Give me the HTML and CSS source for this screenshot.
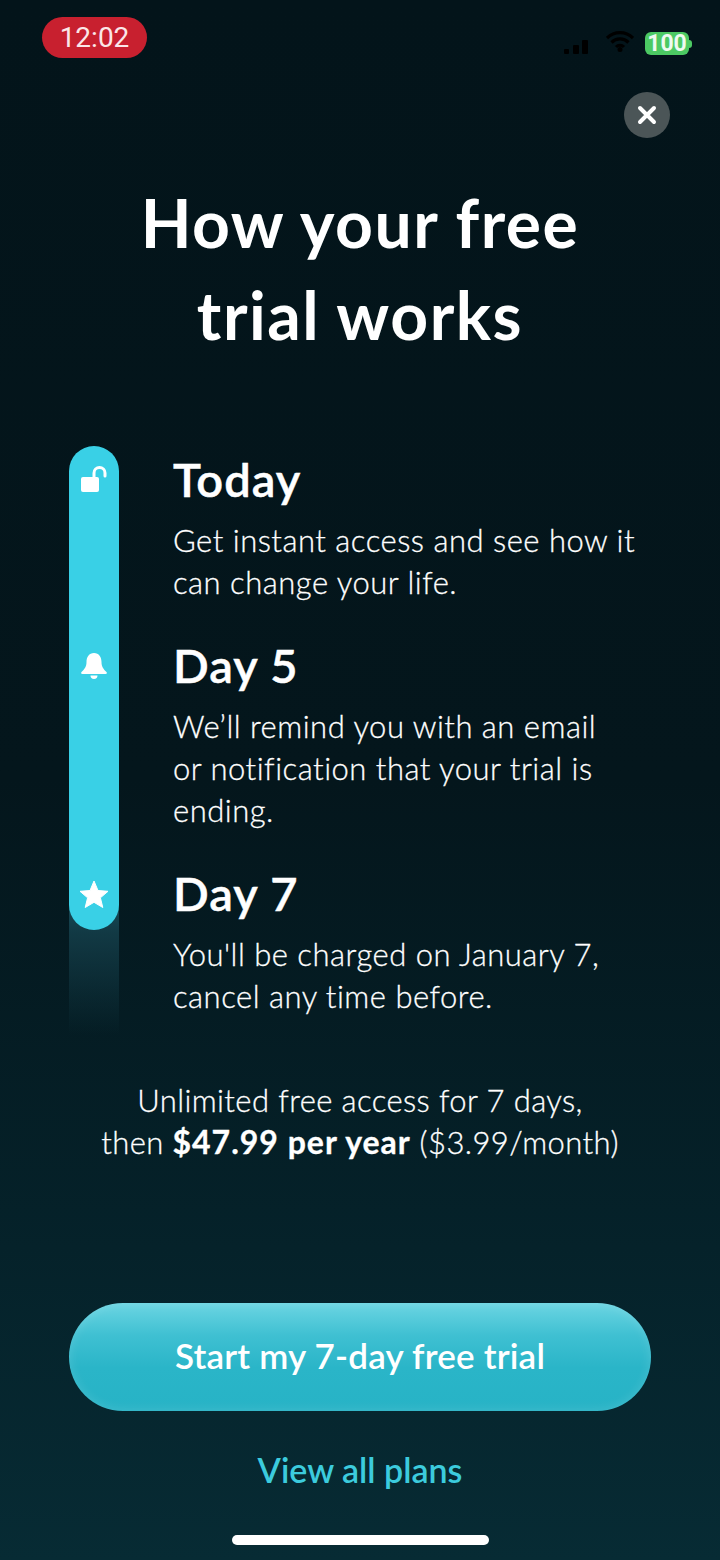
FILE: index.html
```html
<!DOCTYPE html>
<html lang="en">
<head>
  <meta charset="UTF-8" />
  <title>How your free trial works</title>
  <link rel="stylesheet" href="styles.css">
</head>
<body>

<div class="screen">
  <div class="status-bar">
    <span class="time">12:02</span>
    <div class="status-icons">
      <svg class="signal" width="25" height="16" viewBox="0 0 25 16"><rect x="0" y="11" width="5" height="5" rx="1"/><rect x="9" y="7" width="6" height="9" rx="1"/><rect x="18" y="2" width="6" height="14" rx="1"/></svg>
      <svg class="wifi" width="28" height="22" viewBox="0 0 28 22"><path d="M1 8a18.500 18.500 0 0 1 26 0M5.500 12.500a12 12 0 0 1 17 0M10 17a5.500 5.500 0 0 1 8 0" fill="none" stroke="#000" stroke-width="3.200"/><circle cx="14" cy="19.500" r="2.500" fill="#000"/></svg>
      <div class="battery"><span class="battery-level">100</span><span class="battery-tip"></span></div>
    </div>
  </div>

  <div class="close-row">
    <button class="close-btn">
      <svg width="22" height="22" viewBox="0 0 22 22"><path d="M4 4l14 14M18 4L4 18" stroke="#fff" stroke-width="4" stroke-linecap="round"/></svg>
    </button>
  </div>

  <h1 class="title">How your free<br>trial works</h1>

  <div class="timeline">
    <div class="rail-col">
      <div class="rail">
        <svg class="rail-icon icon-lock" width="28" height="28" viewBox="0 0 28 28"><rect x="1" y="11" width="18" height="15" rx="2" fill="#fff"/><path d="M14 11V7a5.500 5.500 0 0 1 11 0v3" fill="none" stroke="#fff" stroke-width="3" stroke-linecap="round"/></svg>
        <svg class="rail-icon icon-bell" width="28" height="28" viewBox="0 0 28 28"><path d="M14 1c-5 0-7.500 4-7.500 9 0 5-2 7-5 10-.8 1-.3 2 1 2h23c1.300 0 1.800-1 1-2-3-3-5-5-5-10 0-5-2.500-9-7.500-9z" fill="#fff"/><path d="M10.500 23.500h7a3.500 3.500 0 0 1-7 0z" fill="#fff"/></svg>
        <svg class="rail-icon icon-star" width="30" height="28" viewBox="0 0 30 28"><path d="M15 1l4 9.500 10 .8-7.600 6.500 2.400 9.700L15 22.300 6.200 27.500l2.400-9.700L1 11.300l10-.8z" fill="#fff" stroke="#fff" stroke-width="1" stroke-linejoin="round"/></svg>
      </div>
      <div class="rail-fade"></div>
    </div>

    <div class="steps">
      <div class="step">
        <h2>Today</h2>
        <p>Get instant access and see how it<br>can change your life.</p>
      </div>
      <div class="step">
        <h2>Day 5</h2>
        <p>We’ll remind you with an email<br>or notification that your trial is<br>ending.</p>
      </div>
      <div class="step">
        <h2>Day 7</h2>
        <p>You'll be charged on January 7,<br>cancel any time before.</p>
      </div>
    </div>
  </div>

  <p class="price">Unlimited free access for 7 days,<br>then <b>$47.99 per year</b> ($3.99/month)</p>

  <button class="cta">Start my 7-day free trial</button>
  <a class="plans-link">View all plans</a>
  <div class="home-indicator"></div>
</div>

</body>
</html>
```

FILE: styles.css
```css
* { box-sizing: border-box; }
body {
  margin: 0;
  font-family: "Lato", "Noto Sans", sans-serif;
  color: #fff;
}
.screen {
  width: 720px;
  height: 1560px;
  overflow: hidden;
  display: flex;
  flex-direction: column;
  align-items: center;
  background: linear-gradient(180deg, #03141a 0%, #04161c 50%, #05222a 80%, #072b34 100%);
}

/* status bar */
.status-bar {
  width: 100%;
  height: 41px;
  margin-top: 17px;
  padding: 0 28px 0 42px;
  display: flex;
  justify-content: space-between;
}
.time {
  width: 105px;
  height: 41px;
  line-height: 41px;
  text-align: center;
  background: #c8202f;
  border-radius: 21px;
  font-family: "Roboto", sans-serif;
  font-size: 28px;
  color: #fbe6e8;
}
.status-icons {
  display: flex;
  align-items: center;
  gap: 17px;
  padding-top: 12px;
}
.signal { fill: #000; margin-top: 4px; }
.wifi { margin-top: -6px; }
.battery { display: flex; align-items: center; margin-left: -6px; }
.battery-level {
  width: 44px;
  height: 23px;
  line-height: 23px;
  text-align: center;
  background: #4cc963;
  border-radius: 6px;
  font-family: "Roboto", sans-serif;
  font-weight: 700;
  font-size: 23px;
  color: #eefaf0;
}
.battery-tip {
  width: 3px;
  height: 8px;
  background: #4cc963;
  border-radius: 0 3px 3px 0;
}

/* close */
.close-row {
  width: 100%;
  padding: 34px 50px 0 0;
  display: flex;
  justify-content: flex-end;
}
.close-btn {
  width: 46px;
  height: 46px;
  padding: 0;
  border: none;
  border-radius: 50%;
  background: #4b5557;
  display: flex;
  align-items: center;
  justify-content: center;
}

.title {
  margin: 39px 0 0;
  font-size: 66px;
  font-weight: 700;
  letter-spacing: 1.500px;
  line-height: 92px;
  text-align: center;
}

/* timeline */
.timeline {
  width: 100%;
  margin-top: 85px;
  padding-left: 69px;
  display: flex;
  gap: 54px;
}
.rail-col { width: 50px; }
.rail {
  position: relative;
  z-index: 1;
  height: 484px;
  border-radius: 25px;
  background: #39d0e6;
  display: flex;
  flex-direction: column;
  align-items: center;
}
.rail-icon { display: block; }
.icon-lock { margin-top: 20px; }
.icon-bell { margin-top: 158px; }
.icon-star { margin-top: 200px; }
.rail-fade {
  height: 130px;
  margin-top: -25px;
  background: linear-gradient(180deg, #164a57 0%, #123a45 20%, rgba(21, 65, 77, 0) 100%);
}

.steps {
  padding-top: 3px;
  display: flex;
  flex-direction: column;
  gap: 32px;
}
.step h2 {
  margin: 0 0 10px;
  font-size: 47px;
  font-weight: 600;
  letter-spacing: 1px;
  line-height: 60px;
  -webkit-text-stroke: .5px #fff;
}
.step p {
  margin: 0;
  font-size: 31px;
  font-weight: 300;
  letter-spacing: .5px;
  line-height: 42px;
  color: #fff;
  -webkit-text-stroke: .3px #fff;
}

.price {
  margin: 44px 0 0;
  font-size: 31px;
  font-weight: 300;
  letter-spacing: .4px;
  line-height: 42px;
  text-align: center;
  color: #fff;
  -webkit-text-stroke: .3px #fff;
}
.price b {
  font-size: 32px;
  font-weight: 700;
  letter-spacing: 1px;
  color: #fff;
}

.cta {
  width: 582px;
  height: 108px;
  margin-top: 140px;
  padding: 0 0 4px;
  border: none;
  border-radius: 54px;
  background: linear-gradient(180deg, #6bd5e2 0%, #3fc0d2 30%, #2ab5c8 60%, #27b3c6 100%);
  box-shadow: inset 0 0 12px rgba(255, 255, 255, .14);
  color: #fff;
  font-family: inherit;
  font-size: 35px;
  font-weight: 600;
  letter-spacing: .2px;
}
.plans-link {
  margin-top: 37px;
  font-size: 34px;
  font-weight: 600;
  line-height: 44px;
  color: #3ccbdd;
}
.home-indicator {
  width: 257px;
  height: 10px;
  margin-top: 43px;
  border-radius: 5px;
  background: #fff;
}
```
